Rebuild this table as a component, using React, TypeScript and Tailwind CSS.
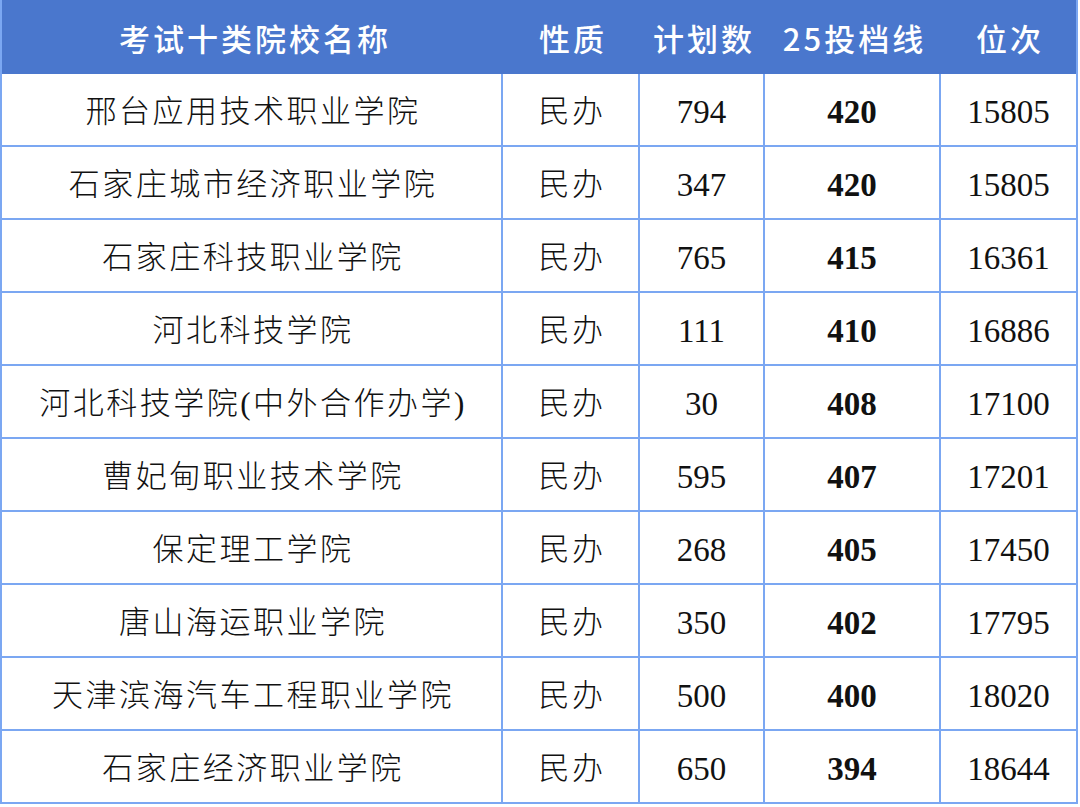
const rows = [
  { name: '邢台应用技术职业学院', type: '民办', plan: '794', line: '420', rank: '15805' },
  { name: '石家庄城市经济职业学院', type: '民办', plan: '347', line: '420', rank: '15805' },
  { name: '石家庄科技职业学院', type: '民办', plan: '765', line: '415', rank: '16361' },
  { name: '河北科技学院', type: '民办', plan: '111', line: '410', rank: '16886' },
  { name: '河北科技学院(中外合作办学)', type: '民办', plan: '30', line: '408', rank: '17100' },
  { name: '曹妃甸职业技术学院', type: '民办', plan: '595', line: '407', rank: '17201' },
  { name: '保定理工学院', type: '民办', plan: '268', line: '405', rank: '17450' },
  { name: '唐山海运职业学院', type: '民办', plan: '350', line: '402', rank: '17795' },
  { name: '天津滨海汽车工程职业学院', type: '民办', plan: '500', line: '400', rank: '18020' },
  { name: '石家庄经济职业学院', type: '民办', plan: '650', line: '394', rank: '18644' },
];

const cols = 'grid grid-cols-[501px_137px_125px_176px_135px]';
const serif = "font-['Liberation_Serif','Noto_Sans_CJK_SC',serif]";

export default function App() {
  return (
    <div className="w-[1080px] h-[807px] bg-white overflow-hidden">
      <div className="w-[1078px] border-x-2 border-[#7ba7f2]">
        <div
          className={`${cols} h-[74px] pt-[3px] bg-[#4a77cd] text-white text-[31px] font-medium tracking-[3px] font-['Noto_Sans_CJK_SC',sans-serif]`}
        >
          <div className="flex items-center justify-center pl-[5px]">考试十类院校名称</div>
          <div className="flex items-center justify-center pl-[3px]">性质</div>
          <div className="flex items-center justify-center pl-[3px]">计划数</div>
          <div className="flex items-center justify-center pl-[3px]">25投档线</div>
          <div className="flex items-center justify-center pl-[3px]">位次</div>
        </div>
        {rows.map((r, i) => (
          <div key={i} className={`${cols} h-[73px] border-b-2 border-[#7ba7f2] text-[#111]`}>
            <div
              className={`flex items-center justify-center pt-[6px] pl-[3px] border-r-2 border-[#7ba7f2] text-[31px] font-light tracking-[2.5px] ${serif}`}
            >
              {r.name}
            </div>
            <div
              className={`flex items-center justify-center pt-[6px] pl-[3px] border-r-2 border-[#7ba7f2] text-[31px] font-light tracking-[2.5px] ${serif}`}
            >
              {r.type}
            </div>
            <div className={`flex items-center justify-center pt-[6px] border-r-2 border-[#7ba7f2] text-[33px] ${serif}`}>
              {r.plan}
            </div>
            <div className={`flex items-center justify-center pt-[6px] border-r-2 border-[#7ba7f2] text-[33px] font-bold ${serif}`}>
              {r.line}
            </div>
            <div className={`flex items-center justify-center pt-[6px] text-[33px] ${serif}`}>{r.rank}</div>
          </div>
        ))}
      </div>
    </div>
  );
}
